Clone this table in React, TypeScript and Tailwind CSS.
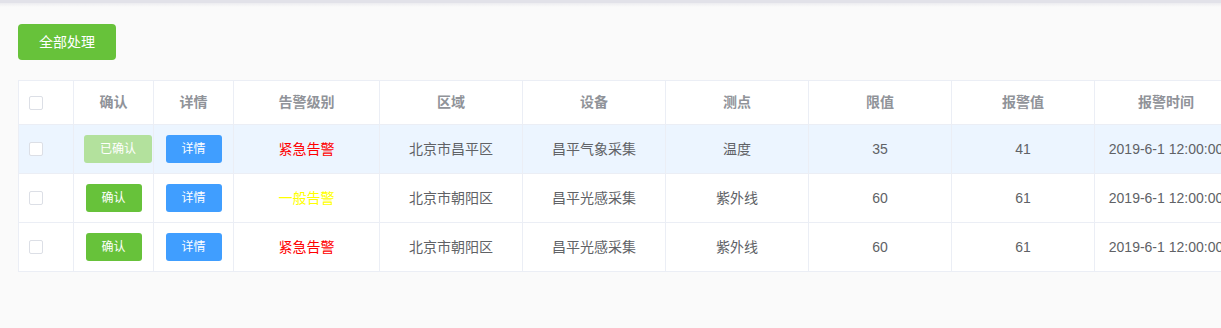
import React from "react";

type Row = {
  confirmed: boolean;
  level: "urgent" | "normal";
  area: string;
  device: string;
  point: string;
  limit: string;
  value: string;
  time: string;
};

const rows: Row[] = [
  { confirmed: true, level: "urgent", area: "北京市昌平区", device: "昌平气象采集", point: "温度", limit: "35", value: "41", time: "2019-6-1 12:00:00" },
  { confirmed: false, level: "normal", area: "北京市朝阳区", device: "昌平光感采集", point: "紫外线", limit: "60", value: "61", time: "2019-6-1 12:00:00" },
  { confirmed: false, level: "urgent", area: "北京市朝阳区", device: "昌平光感采集", point: "紫外线", limit: "60", value: "61", time: "2019-6-1 12:00:00" },
];

const widths = ["w-[55px]", "w-[80px]", "w-[80px]", "w-[146px]", "w-[143px]", "w-[143px]", "w-[143px]", "w-[143px]", "w-[143px]", "w-[143px]"];
const headers = ["", "确认", "详情", "告警级别", "区域", "设备", "测点", "限值", "报警值", "报警时间"];

const font = "font-['Liberation_Sans','Noto_Sans_CJK_SC',sans-serif]";

function Checkbox() {
  return <span className="block w-[14px] h-[14px] rounded-[2px] border border-[#dcdfe6] bg-white" />;
}

export default function App() {
  return (
    <div className={`w-[1221px] h-[328px] bg-[#fafafa] overflow-hidden ${font}`}>
      <div className="h-[3px] bg-[#e2e2e9]" />
      <div className="h-[4px] bg-gradient-to-b from-[#ececf0] to-[#fafafa]" />
      <div className="pl-[18px] pt-[17px]">
        <button className="w-[98px] h-[36px] rounded-[4px] bg-[#67c23a] text-white text-[14px] leading-none">全部处理</button>
      </div>
      <div className="ml-[18px] mt-[20px] w-[1300px] border-t border-[#ebeef5] bg-white">
        <div className="flex h-[44px] border-b border-[#ebeef5]">
          {headers.map((h, i) => (
            <div key={i} className={`${widths[i]} shrink-0 border-l border-[#ebeef5] flex items-center ${i === 0 ? "pl-[10px]" : "justify-center"} text-[14px] font-bold text-[#909399]`}>
              {i === 0 ? <Checkbox /> : h}
            </div>
          ))}
        </div>
        {rows.map((r, ri) => {
          const cells = [
            <Checkbox />,
            r.confirmed ? (
              <span className="w-[68px] h-[28px] shrink-0 rounded-[3px] bg-[#b3e19d] text-white text-[12px] flex items-center justify-center">已确认</span>
            ) : (
              <span className="w-[56px] h-[28px] rounded-[3px] bg-[#67c23a] text-white text-[12px] flex items-center justify-center">确认</span>
            ),
            <span className="w-[56px] h-[28px] rounded-[3px] bg-[#409eff] text-white text-[12px] flex items-center justify-center">详情</span>,
            <span className={r.level === "urgent" ? "text-[#ff0000]" : "text-[#ffff00]"}>{r.level === "urgent" ? "紧急告警" : "一般告警"}</span>,
            r.area,
            r.device,
            r.point,
            r.limit,
            r.value,
            <span className="whitespace-nowrap">{r.time}</span>,
          ];
          return (
            <div key={ri} className={`flex h-[49px] border-b border-[#ebeef5] ${ri === 0 ? "bg-[#ecf5ff]" : "bg-white"}`}>
              {cells.map((c, i) => (
                <div
                  key={i}
                  className={`${widths[i]} shrink-0 border-l border-[#ebeef5] flex items-center ${
                    i === 0 ? "pl-[10px]" : i === 1 && r.confirmed ? "pl-[10px]" : "justify-center"
                  } text-[14px] text-[#606266]`}
                >
                  {c}
                </div>
              ))}
            </div>
          );
        })}
      </div>
    </div>
  );
}
